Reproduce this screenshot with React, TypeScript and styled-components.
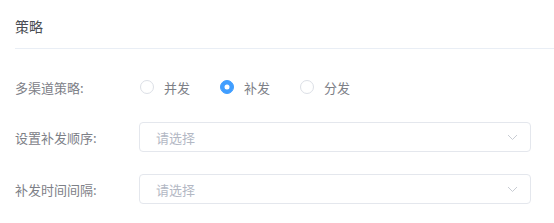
import React, { useState } from "react";
import styled, { createGlobalStyle } from "styled-components";

const Global = createGlobalStyle`
  html, body { margin: 0; padding: 0; background: #fff; }
  body { font-family: "Noto Sans CJK SC", "Noto Sans", sans-serif; }
  * { box-sizing: border-box; }
`;

const Page = styled.div`
  width: 554px;
  height: 223px;
  padding-left: 15px;
  overflow: hidden;
`;

const Header = styled.div`
  height: 49px;
  padding-top: 18px;
  border-bottom: 1px solid #e9eef5;
  font-size: 14px;
  line-height: 16px;
  color: #4a4d52;
`;

const Form = styled.div`
  display: flex;
  flex-direction: column;
  gap: 22px;
  padding-top: 25px;
`;

const Row = styled.div<{ $h: number }>`
  display: flex;
  align-items: center;
  height: ${(p) => p.$h}px;
`;

const Label = styled.div`
  width: 124px;
  flex: none;
  font-size: 13px;
  color: #7d8087;
`;

const RadioGroup = styled.div`
  display: flex;
  align-items: center;
  padding-left: 1px;
`;

const RadioItem = styled.label`
  display: flex;
  align-items: center;
  margin-right: 30px;
  cursor: pointer;
  font-size: 13px;
  color: #7d8087;
`;

const Circle = styled.span<{ $on: boolean }>`
  position: relative;
  width: 14px;
  height: 14px;
  border-radius: 50%;
  border: 1px solid ${(p) => (p.$on ? "#409eff" : "#dcdfe6")};
  background: ${(p) => (p.$on ? "#409eff" : "#fff")};
  margin-right: 10px;
  &::after {
    content: "";
    display: ${(p) => (p.$on ? "block" : "none")};
    position: absolute;
    left: 50%;
    top: 50%;
    width: 5px;
    height: 5px;
    border-radius: 50%;
    background: #fff;
    transform: translate(-50%, -50%);
  }
`;

const Select = styled.div`
  width: 392px;
  height: 30px;
  border: 1px solid #e4e7ed;
  border-radius: 4px;
  display: flex;
  align-items: center;
  justify-content: space-between;
  padding: 0 12px 0 16px;
  font-size: 13px;
  color: #b3b8c4;
  background: #fff;
`;

const Chevron = () => (
  <svg width="11" height="7" viewBox="0 0 11 7" fill="none">
    <path d="M1 1l4.5 4.5L10 1" stroke="#c8ccd3" strokeWidth="1" />
  </svg>
);

export default function App() {
  const [val, setVal] = useState("补发");
  const opts = ["并发", "补发", "分发"];
  return (
    <>
      <Global />
      <Page>
        <Header>策略</Header>
        <Form>
          <Row $h={26}>
            <Label>多渠道策略:</Label>
            <RadioGroup>
              {opts.map((o) => (
                <RadioItem key={o} onClick={() => setVal(o)}>
                  <Circle $on={val === o} />
                  {o}
                </RadioItem>
              ))}
            </RadioGroup>
          </Row>
          <Row $h={30}>
            <Label>设置补发顺序:</Label>
            <Select>
              <span>请选择</span>
              <Chevron />
            </Select>
          </Row>
          <Row $h={30}>
            <Label>补发时间间隔:</Label>
            <Select>
              <span>请选择</span>
              <Chevron />
            </Select>
          </Row>
        </Form>
      </Page>
    </>
  );
}
